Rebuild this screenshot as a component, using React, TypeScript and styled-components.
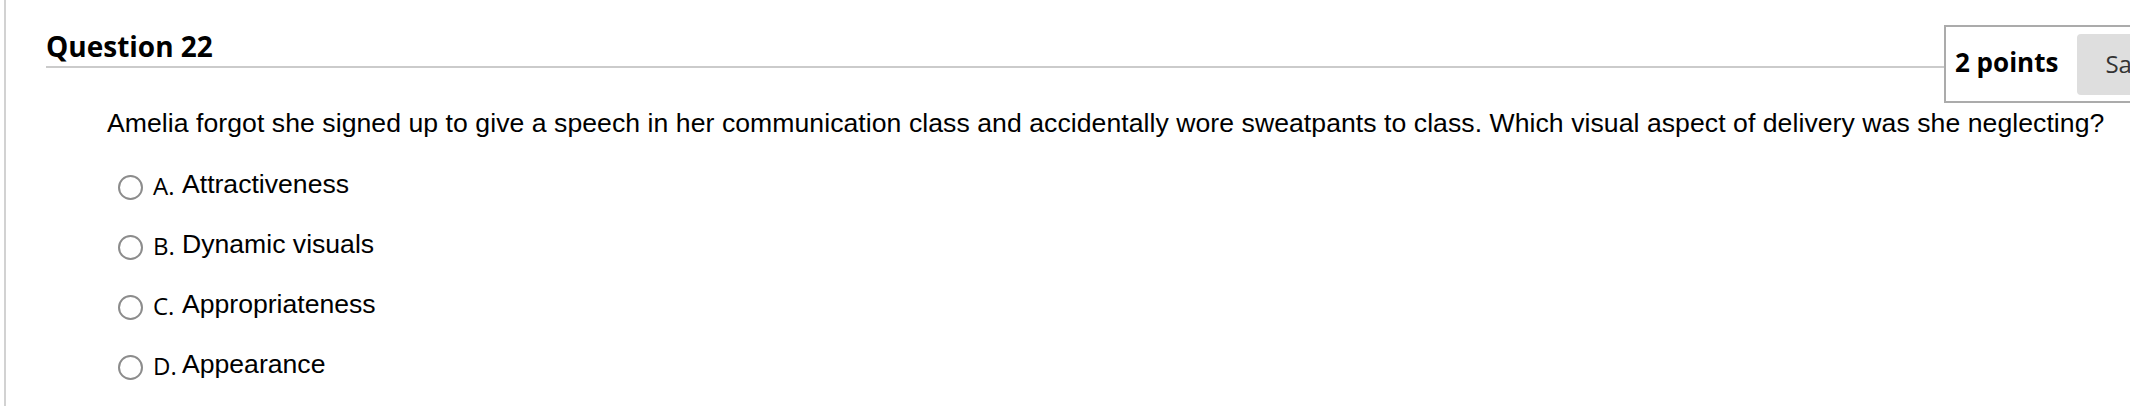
import React from "react";
import styled, { createGlobalStyle } from "styled-components";

const GlobalStyle = createGlobalStyle`
  html, body {
    margin: 0;
    padding: 0;
    background: #ffffff;
    overflow: hidden;
  }
  body {
    font-family: "Liberation Sans", Arial, sans-serif;
    color: #000;
  }
`;

const Page = styled.div`
  min-height: 406px;
  margin-left: 4px;
  border-left: 2px solid #d2d2d2;
  padding-left: 40px;
  box-sizing: border-box;
`;

const Header = styled.header`
  display: flex;
  align-items: flex-start;
  padding-top: 25px;
`;

const TitleBar = styled.div`
  flex: 0 0 1898px;
  margin-top: 2px;
  padding-bottom: 1px;
  border-bottom: 2px solid #cbcbcb;
`;

const Title = styled.h2`
  margin: 0;
  font-family: "Open Sans", "Noto Sans", sans-serif;
  font-weight: 700;
  font-size: 28px;
  line-height: 38px;
  color: #000;
`;

const PointsBox = styled.div`
  flex-shrink: 0;
  display: flex;
  align-items: center;
  gap: 19px;
  height: 74px;
  padding: 0 9px;
  border: 2px solid #ababab;
`;

const Points = styled.span`
  font-family: "Open Sans", "Noto Sans", sans-serif;
  font-weight: 700;
  font-size: 26px;
  line-height: 35px;
  padding-bottom: 4px;
  color: #000;
  white-space: nowrap;
`;

const SaveButton = styled.button`
  flex-shrink: 0;
  height: 61px;
  padding: 0 28px 3px;
  border: none;
  border-radius: 4px;
  background: #dedede;
  color: #333;
  font-family: "Open Sans", "Noto Sans", sans-serif;
  font-size: 24px;
  white-space: nowrap;
  margin-top: 1px;
`;

const Body = styled.div`
  padding-left: 61px;
`;

const Prompt = styled.p`
  margin: 4px 0 0;
  font-size: 26.6px;
  letter-spacing: 0.055px;
  line-height: 32px;
  white-space: nowrap;
`;

const Options = styled.ul`
  list-style: none;
  margin: 29px 0 0;
  padding: 0 0 0 11px;
  display: grid;
  row-gap: 28px;
`;

const Option = styled.li`
  display: grid;
  grid-template-columns: 25px 29px auto;
  column-gap: 10px;
  align-items: start;
  height: 32px;
`;

const Radio = styled.span`
  width: 25px;
  height: 25px;
  margin-top: 7px;
  box-sizing: border-box;
  border: 2px solid #8c8c8c;
  border-radius: 50%;
  background: #fff;
`;

const Letter = styled.span`
  font-family: "Open Sans", "Noto Sans", sans-serif;
  font-size: 24px;
  line-height: 32px;
  margin-top: 2px;
  margin-right: -10px;
`;

const OptionText = styled.span`
  font-size: 26.6px;
  line-height: 32px;
  margin-left: -10px;
`;

const choices = [
  { letter: "A.", text: "Attractiveness" },
  { letter: "B.", text: "Dynamic visuals" },
  { letter: "C.", text: "Appropriateness" },
  { letter: "D.", text: "Appearance" },
];

export default function App() {
  return (
    <>
      <GlobalStyle />
      <Page>
        <Header>
          <TitleBar>
            <Title>Question 22</Title>
          </TitleBar>
          <PointsBox>
            <Points>2 points</Points>
            <SaveButton type="button">Save Answer</SaveButton>
          </PointsBox>
        </Header>
        <Body>
          <Prompt>
            Amelia forgot she signed up to give a speech in her communication class and
            accidentally wore sweatpants to class. Which visual aspect of delivery was she
            neglecting?
          </Prompt>
          <Options>
            {choices.map((c) => (
              <Option key={c.letter}>
                <Radio />
                <Letter>{c.letter}</Letter>
                <OptionText>{c.text}</OptionText>
              </Option>
            ))}
          </Options>
        </Body>
      </Page>
    </>
  );
}
